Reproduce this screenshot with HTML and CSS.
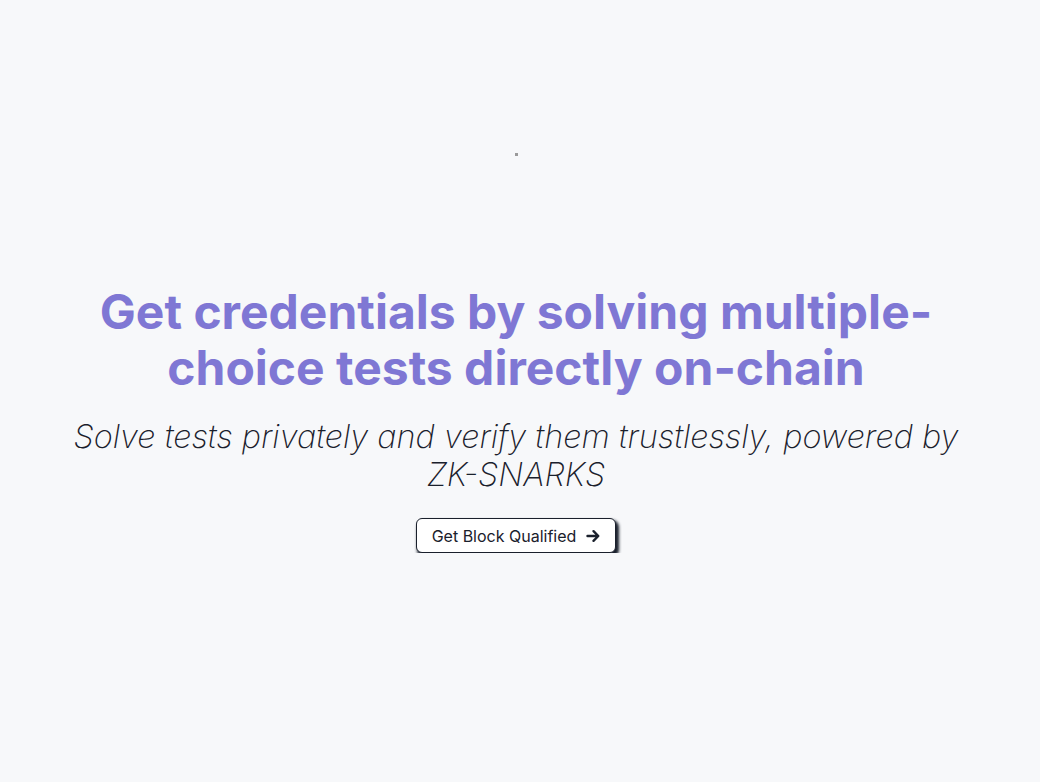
FILE: index.html
```html
<!DOCTYPE html>
<html lang="en">
<head>
    <meta charset="UTF-8">
    <meta name="viewport" content="width=device-width, initial-scale=1.0">
    <title>Block Qualified</title>
    <link rel="stylesheet" href="styles.css">
</head>
<body>
    <div class="loader"><span class="dot"></span></div>
    <main class="hero">
        <h1 class="hero-title">Get credentials by solving multiple-choice tests directly on-chain</h1>
        <p class="hero-subtitle">Solve tests privately and verify them trustlessly, powered by ZK-SNARKS</p>
        <button class="cta">
            Get Block Qualified
            <svg class="cta-arrow" viewBox="0 0 14 14" width="14" height="14">
                <path d="M1.5 7h10.5M7.5 2.2l4.8 4.8-4.8 4.8" fill="none" stroke="currentColor" stroke-width="2.4" stroke-linecap="round" stroke-linejoin="round"/>
            </svg>
        </button>
    </main>
</body>
</html>
```

FILE: styles.css
```css
body {
    margin: 0;
    padding-right: 8px;
    background-color: #f7f8fa;
    font-family: Inter, "Noto Sans", sans-serif;
    color: #1a202c;
}
.loader {
    display: flex;
    justify-content: center;
    padding-top: 153px;
    height: 3px;
}
.dot {
    width: 3px;
    height: 3px;
    background: #9a9a9a;
}
.hero {
    max-width: 920px;
    margin: 128px auto 0;
    text-align: center;
}
.hero-title {
    margin: 0;
    font-size: 48px;
    line-height: 56px;
    font-weight: 700;
    color: #7f77d4;
}
.hero-subtitle {
    margin: 22px 0 0;
    font-size: 32.5px;
    line-height: 38px;
    font-weight: 200;
    font-style: italic;
}
.cta {
    margin-top: 24px;
    display: inline-flex;
    align-items: center;
    gap: 10px;
    padding: 7px 15px 6px;
    font-family: inherit;
    font-size: 16px;
    line-height: 20px;
    color: #1a202c;
    background: #fff;
    border: 1px solid #1a202c;
    border-radius: 6px;
    box-shadow: 2px 3px 3px 1px #1a202c;
    cursor: pointer;
}
.cta-arrow {
    display: block;
}
```
